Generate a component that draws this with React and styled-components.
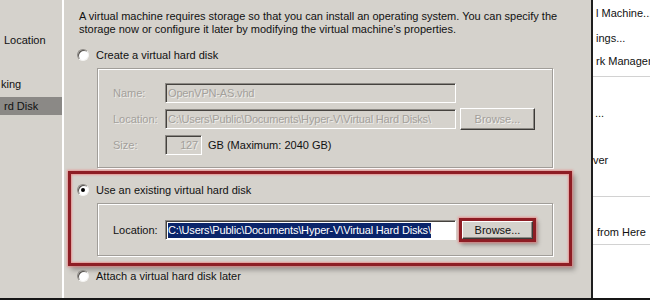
import React from 'react';
import styled, { createGlobalStyle } from 'styled-components';

const GlobalStyle = createGlobalStyle`
  html, body {
    margin: 0;
    padding: 0;
  }
  body {
    width: 650px;
    height: 300px;
    overflow: hidden;
    background: #d5d2cc;
    font-family: "Liberation Sans", Arial, sans-serif;
    font-size: 11px;
    color: #111;
  }
`;

const Frame = styled.div`
  display: grid;
  grid-template-columns: 62px 531px 57px;
  height: 300px;
  box-sizing: border-box;
  border-bottom: 2px solid #161616;
`;

/* left wizard steps, cropped */
const NavPane = styled.div`
  background: #d5d2cc;
  padding-top: 31px;
  overflow: hidden;
`;

const NavItem = styled.div`
  height: 18px;
  line-height: 18px;
  margin-bottom: 4px;
  white-space: nowrap;
  padding-left: ${p => p.indent || 0}px;
  background: ${p => (p.selected ? '#8b8986' : 'transparent')};
`;

/* main wizard page */
const Main = styled.div`
  background: #d5d2cc;
  border-left: 2px solid #fff;
  border-right: 2px solid #1e1e1e;
  padding-top: 10px;
  overflow: hidden;
`;

const Intro = styled.p`
  margin: 0 0 0 15px;
  line-height: 13px;
  white-space: nowrap;
`;

const RadioRow = styled.div`
  display: flex;
  align-items: center;
  gap: 7px;
  height: 14px;
  margin-top: ${p => p.top}px;
  margin-left: ${p => p.left}px;
  white-space: nowrap;
`;

const Radio = styled.span`
  position: relative;
  width: 12px;
  height: 12px;
  box-sizing: border-box;
  border-radius: 50%;
  background: #fff;
  border: 1px solid;
  border-color: #8d8a85 #f4f3f1 #f4f3f1 #8d8a85;
  box-shadow: inset 1px 1px 0 #55524e;
  flex: none;
  &::after {
    content: '';
    display: ${p => (p.checked ? 'block' : 'none')};
    position: absolute;
    left: 3px;
    top: 3px;
    width: 4px;
    height: 4px;
    border-radius: 50%;
    background: #000;
  }
`;

const GroupBox = styled.div`
  margin-top: ${p => p.top}px;
  margin-left: ${p => p.left}px;
  width: 456px;
  box-sizing: border-box;
  border: 1px solid #a19e99;
  box-shadow: inset 1px 1px 0 #fff, 1px 1px 0 #fff;
  padding: ${p => p.pad};
  display: grid;
  grid-template-columns: 52px auto;
  row-gap: 5px;
  align-items: center;
`;

const Label = styled.span`
  color: ${p => (p.disabled ? '#a3a09b' : '#111')};
  text-shadow: ${p => (p.disabled ? '1px 1px 0 rgba(255,255,255,0.6)' : 'none')};
`;

const FieldRow = styled.div`
  display: flex;
  align-items: center;
  gap: ${p => p.gap || 4}px;
  white-space: nowrap;
`;

const Field = styled.div`
  width: ${p => p.w}px;
  height: 20px;
  box-sizing: border-box;
  border: 1px solid;
  border-color: #8d8a85 #fff #fff #8d8a85;
  box-shadow: inset 1px 1px 0 #45423e;
  background: ${p => (p.disabled ? '#d5d2cc' : '#fff')};
  color: ${p => (p.disabled ? '#a3a09b' : '#111')};
  text-shadow: ${p => (p.disabled ? '1px 1px 0 rgba(255,255,255,0.6)' : 'none')};
  text-align: ${p => (p.right ? 'right' : 'left')};
  letter-spacing: -0.17px;
  padding: 0 3px 0 2px;
  line-height: 18px;
  overflow: hidden;
  white-space: nowrap;
`;

const Selection = styled.span`
  background: #0a246a;
  color: #fff;
  padding: 1px 0 2px;
`;

const Button = styled.button`
  width: ${p => p.w || 75}px;
  height: ${p => p.h || 22}px;
  box-sizing: border-box;
  padding: 0;
  font: inherit;
  background: #d5d2cc;
  border: 1px solid;
  border-color: #fff #3c3a37 #3c3a37 #fff;
  box-shadow: inset -1px -1px 0 #8d8a85;
  color: ${p => (p.disabled ? '#a3a09b' : '#111')};
  text-shadow: ${p => (p.disabled ? '1px 1px 0 rgba(255,255,255,0.7)' : 'none')};
`;

/* red annotation frames */
const Callout = styled.div`
  margin: 3px 0 0 4px;
  width: 504px;
  box-sizing: border-box;
  border: 3px solid #8e1d24;
  box-shadow: 0 0 2px 1px rgba(238, 128, 128, 0.75),
    inset 0 0 2px 1px rgba(238, 128, 128, 0.75), 3px 4px 5px rgba(0, 0, 0, 0.3);
  padding: 9px 0 7px 6px;
`;

const ButtonMark = styled.span`
  display: inline-flex;
  border: 3px solid #8e1d24;
  box-shadow: 0 0 2px 1px rgba(238, 128, 128, 0.75),
    inset 0 0 2px 1px rgba(238, 128, 128, 0.75), 2px 3px 4px rgba(0, 0, 0, 0.3);
`;

/* right actions pane, cropped */
const ActionPane = styled.div`
  background: #fff;
  overflow: hidden;
`;

const ActionItem = styled.div`
  height: ${p => p.h}px;
  box-sizing: border-box;
  padding-top: ${p => p.pt || 0}px;
  padding-left: ${p => p.indent || 0}px;
  line-height: ${p => p.lh || p.h}px;
  white-space: nowrap;
  border-bottom: ${p => (p.divider ? '1px solid #d2d2d2' : 'none')};
`;

const PATH = 'C:\\Users\\Public\\Documents\\Hyper-V\\Virtual Hard Disks\\';

export default function App() {
  return (
    <>
      <GlobalStyle />
      <Frame>
        <NavPane>
          <NavItem indent={4}>Location</NavItem>
          <NavItem />
          <NavItem indent={1}>king</NavItem>
          <NavItem selected indent={4}>rd Disk</NavItem>
        </NavPane>

        <Main>
          <Intro>
            A virtual machine requires storage so that you can install an operating system. You can specify the
            <br />
            storage now or configure it later by modifying the virtual machine’s properties.
          </Intro>

          <RadioRow top={12} left={13}>
            <Radio />
            Create a virtual hard disk
          </RadioRow>

          <GroupBox top={6} left={33} pad="14px 0 12px 15px">
            <Label disabled>Name:</Label>
            <Field disabled w={291}>OpenVPN-AS.vhd</Field>
            <Label disabled>Location:</Label>
            <FieldRow>
              <Field disabled w={291}>{PATH}</Field>
              <Button disabled>Browse...</Button>
            </FieldRow>
            <Label disabled>Size:</Label>
            <FieldRow gap={6}>
              <Field disabled right w={37}>127</Field>
              <span>GB (Maximum: 2040 GB)</span>
            </FieldRow>
          </GroupBox>

          <Callout>
            <RadioRow top={0} left={0}>
              <Radio checked />
              Use an existing virtual hard disk
            </RadioRow>
            <GroupBox top={6} left={20} pad="14px 0 13px 15px">
              <Label>Location:</Label>
              <FieldRow gap={3}>
                <Field w={291}>
                  <Selection>{PATH}</Selection>
                </Field>
                <ButtonMark>
                  <Button w={71} h={18}>Browse...</Button>
                </ButtonMark>
              </FieldRow>
            </GroupBox>
          </Callout>

          <RadioRow top={3} left={13}>
            <Radio />
            Attach a virtual hard disk later
          </RadioRow>
        </Main>

        <ActionPane>
          <ActionItem h={27} indent={3}>l Machine...</ActionItem>
          <ActionItem h={23} indent={3}>ings...</ActionItem>
          <ActionItem h={27} lh={22} divider indent={3}>rk Manager</ActionItem>
          <ActionItem h={72} indent={2}>...</ActionItem>
          <ActionItem h={48} lh={22} divider indent={0}>ver</ActionItem>
          <ActionItem h={48} pt={24} lh={22} divider indent={4}>from Here</ActionItem>
        </ActionPane>
      </Frame>
    </>
  );
}
